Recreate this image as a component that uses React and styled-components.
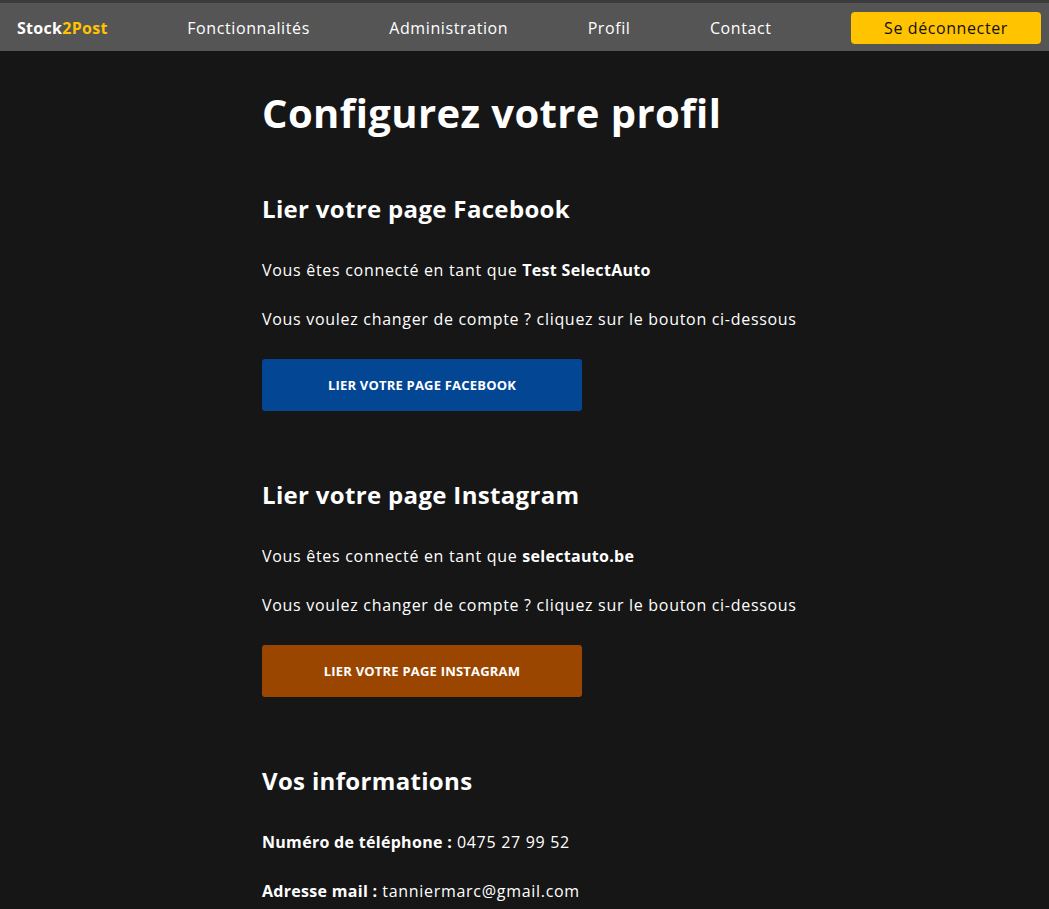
import React from 'react'
import styled, { createGlobalStyle } from 'styled-components'

const GlobalStyle = createGlobalStyle`
  * {
    box-sizing: border-box;
  }
  body {
    margin: 0;
    background: #161616;
    color: #ffffff;
    font-family: 'Open Sans', 'Liberation Sans', sans-serif;
  }
`

const Nav = styled.nav`
  height: 51px;
  background: #555555;
  border-top: 3px solid #3b3b3b;
  display: flex;
  align-items: center;
  justify-content: space-between;
  padding: 1px 8px 0 17px;
`

const Logo = styled.a`
  font-weight: 700;
  font-size: 16px;
  letter-spacing: 0.3px;
  color: #ffffff;
  text-decoration: none;
  span {
    color: #ffc300;
  }
`

const NavLink = styled.a`
  font-size: 16px;
  letter-spacing: 0.6px;
  color: #ffffff;
  text-decoration: none;
`

const Logout = styled.button`
  width: 190px;
  height: 32px;
  border: none;
  border-radius: 4px;
  background: #ffc300;
  color: #111111;
  font-family: inherit;
  font-size: 16px;
  letter-spacing: 0.6px;
  cursor: pointer;
`

const Main = styled.main`
  padding: 0 0 0 262px;
  display: flex;
  flex-direction: column;
`

const Title = styled.h1`
  margin: 36px 0 0;
  font-size: 40px;
  line-height: 52px;
  font-weight: 700;
  letter-spacing: 0.4px;
`

const Section = styled.section`
  display: flex;
  flex-direction: column;
  margin-top: ${(p) => p.$top}px;
`

const Heading = styled.h2`
  margin: 0 0 31px;
  font-size: 24px;
  line-height: 36px;
  font-weight: 700;
  letter-spacing: 0.33px;
`

const Text = styled.p`
  margin: 0 0 25px;
  font-size: 16px;
  line-height: 24px;
  letter-spacing: 0.7px;
  strong {
    font-weight: 700;
    letter-spacing: 0.3px;
  }
`

const LinkButton = styled.button`
  margin-top: 3px;
  width: 320px;
  height: 52px;
  border: none;
  border-radius: 3px;
  background: ${(p) => p.$color};
  color: #ffffff;
  font-family: inherit;
  font-size: 13px;
  font-weight: 700;
  letter-spacing: 0.2px;
  text-transform: uppercase;
  cursor: pointer;
`

const App = () => {
  return (
    <>
      <GlobalStyle />
      <Nav>
        <Logo href="#">
          Stock<span>2Post</span>
        </Logo>
        <NavLink href="#">Fonctionnalités</NavLink>
        <NavLink href="#">Administration</NavLink>
        <NavLink href="#">Profil</NavLink>
        <NavLink href="#">Contact</NavLink>
        <Logout>Se déconnecter</Logout>
      </Nav>
      <Main>
        <Title>Configurez votre profil</Title>
        <Section $top={52}>
          <Heading>Lier votre page Facebook</Heading>
          <Text>
            Vous êtes connecté en tant que <strong>Test SelectAuto</strong>
          </Text>
          <Text>Vous voulez changer de compte ? cliquez sur le bouton ci-dessous</Text>
          <LinkButton $color="#034694">Lier votre page Facebook</LinkButton>
        </Section>
        <Section $top={66}>
          <Heading>Lier votre page Instagram</Heading>
          <Text>
            Vous êtes connecté en tant que <strong>selectauto.be</strong>
          </Text>
          <Text>Vous voulez changer de compte ? cliquez sur le bouton ci-dessous</Text>
          <LinkButton $color="#9b4600">Lier votre page Instagram</LinkButton>
        </Section>
        <Section $top={66}>
          <Heading>Vos informations</Heading>
          <Text>
            <strong>Numéro de téléphone :</strong> 0475 27 99 52
          </Text>
          <Text>
            <strong>Adresse mail :</strong> tanniermarc@gmail.com
          </Text>
        </Section>
      </Main>
    </>
  )
}

export default App
